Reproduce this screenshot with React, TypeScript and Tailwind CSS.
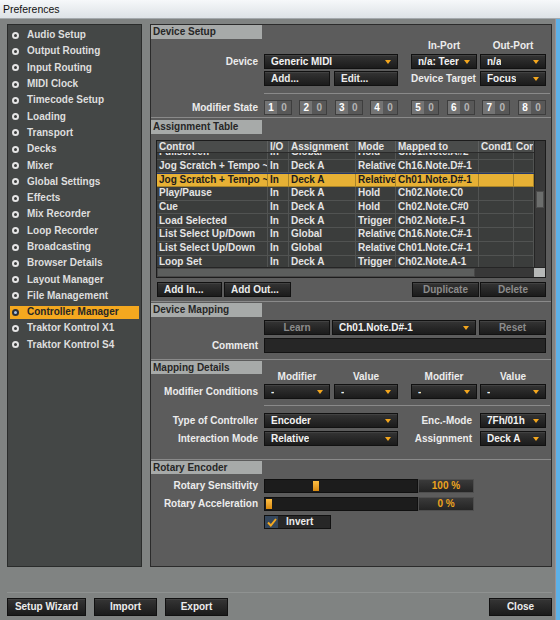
import React from 'react';

const sidebarItems = [
  'Audio Setup', 'Output Routing', 'Input Routing', 'MIDI Clock', 'Timecode Setup',
  'Loading', 'Transport', 'Decks', 'Mixer', 'Global Settings', 'Effects',
  'Mix Recorder', 'Loop Recorder', 'Broadcasting', 'Browser Details',
  'Layout Manager', 'File Management', 'Controller Manager',
  'Traktor Kontrol X1', 'Traktor Kontrol S4',
];

const headers = ['Control', 'I/O', 'Assignment', 'Mode', 'Mapped to', 'Cond1', 'Con'];

const rows = [
  ['Fullscreen', 'In', 'Global', 'Hold', 'Ch01.Note.A#2'],
  ['Jog Scratch + Tempo ~', 'In', 'Deck A', 'Relative', 'Ch16.Note.D#-1'],
  ['Jog Scratch + Tempo ~', 'In', 'Deck A', 'Relative', 'Ch01.Note.D#-1'],
  ['Play/Pause', 'In', 'Deck A', 'Hold', 'Ch02.Note.C0'],
  ['Cue', 'In', 'Deck A', 'Hold', 'Ch02.Note.C#0'],
  ['Load Selected', 'In', 'Deck A', 'Trigger', 'Ch02.Note.F-1'],
  ['List Select Up/Down', 'In', 'Global', 'Relative', 'Ch16.Note.C#-1'],
  ['List Select Up/Down', 'In', 'Global', 'Relative', 'Ch01.Note.C#-1'],
  ['Loop Set', 'In', 'Deck A', 'Trigger', 'Ch02.Note.A-1'],
  ['Loop Out', 'In', 'Deck A', 'Trigger', 'Ch02.Note.B-1'],
];

const cols = 'grid grid-cols-[111px_21px_67px_40px_83px_35px_20px]';
const dark = 'bg-linear-to-b from-[#353535] to-[#1b1b1b] border border-[#111] shadow-[inset_0_1px_0_rgba(255,255,255,0.07)]';

const Arrow = () => (
  <svg width="6" height="4" viewBox="0 0 6 4" className="ml-auto mr-[6px] shrink-0">
    <path d="M0 0H6L3 4Z" fill="#f4a71e" />
  </svg>
);

const Drop = ({ text, w }: { text: string; w: string }) => (
  <div className={`h-[15px] flex items-center pl-[6px] text-[#f2f2f2] ${dark} ${w}`}>
    <span className="whitespace-nowrap overflow-hidden">{text}</span>
    <Arrow />
  </div>
);

const Btn = ({ text, w, dim, left, h = 'h-[15px]' }: { text: string; w: string; dim?: boolean; left?: boolean; h?: string }) => (
  <div className={`${h} flex items-center ${left ? 'pl-[6px]' : 'justify-center'} ${dark} ${w} ${dim ? 'text-[#8c8c8c]' : 'text-[#ececec]'}`}>
    {text}
  </div>
);

const Head = ({ text, h = 'h-[14px]', mt = '' }: { text: string; h?: string; mt?: string }) => (
  <div className={`w-[111px] ${h} ${mt} bg-[#a7aaa9] text-[#262626] pl-[2px] flex items-center shrink-0`}>{text}</div>
);

const Sep = ({ mt }: { mt: string }) => <div className={`${mt} h-px bg-[#8a8a8a] shrink-0`} />;

const Label = ({ text }: { text: string }) => (
  <div className="w-[107px] text-right text-[#ececec] whitespace-nowrap shrink-0">{text}</div>
);

const ModPair = ({ n }: { n: number }) => (
  <div className="w-[28px] h-[15px] flex border border-[#3e3e3e] bg-[#585858]">
    <div className="w-[12px] flex items-center justify-center bg-[#747474] text-white">{n}</div>
    <div className="flex-1 flex items-center justify-center text-[#b4b4b4]">0</div>
  </div>
);

const Sidebar = () => (
  <div className="w-[135px] shrink-0 border border-[#2a2c2b] bg-[#444746] pt-[2px] flex flex-col">
    {sidebarItems.map((item) => {
      const sel = item === 'Controller Manager';
      return (
        <div key={item} className="h-[16.3px] flex items-center">
          <div className={`mx-[2px] h-[13px] flex-1 flex items-center ${sel ? 'bg-[#f4a81f] text-[#262626]' : 'text-[#dedede]'}`}>
            <div className={`ml-[2px] w-[7px] h-[7px] rounded-full border-2 ${sel ? 'border-[#2c3038] bg-[#a9c2e6]' : 'border-[#e4e4e4] bg-[#3a3c3b]'}`} />
            <span className="ml-[8px] whitespace-nowrap">{item}</span>
          </div>
        </div>
      );
    })}
  </div>
);

const Table = () => (
  <div className="ml-[5px] mt-[6px] w-[390px] h-[138px] shrink-0 border border-[#1c1c1c] bg-[#3b3d3c] flex flex-col">
    <div className="flex flex-1 min-h-0">
      <div className="w-[377px] flex flex-col">
        <div className={`${cols} h-[12px] shrink-0 bg-[#4a4c4b] border-b border-[#2a2a2a] text-[#e6e6e6]`}>
          {headers.map((h) => (
            <div key={h} className="px-[2px] flex items-center border-r border-[#5e605f] overflow-hidden whitespace-nowrap">{h}</div>
          ))}
        </div>
        <div className="flex-1 overflow-hidden">
          <div className="-mt-[7px]">
            {rows.map((r, i) => {
              const sel = i === 2;
              return (
                <div
                  key={i}
                  className={`${cols} h-[13.7px] border-b ${sel ? 'bg-[#e7b135] text-[#1c1c1c] border-b-[#a9852a] border-t border-t-[#24376a]' : 'text-[#e4e4e4] border-b-[#515352]'}`}
                >
                  {[...r, '', ''].map((c, j) => (
                    <div
                      key={j}
                      className={`px-[2px] flex items-center overflow-hidden whitespace-nowrap border-r ${sel ? 'border-[#a9852a]' : 'border-[#515352]'}`}
                    >
                      {c}
                    </div>
                  ))}
                </div>
              );
            })}
          </div>
        </div>
      </div>
      <div className="w-[11px] bg-[#393939] border-l border-[#252525] flex flex-col">
        <div className="h-[50px]" />
        <div className="h-[17px] mx-[1px] bg-[#6c6e6d] border border-[#4c4c4c]" />
      </div>
    </div>
    <div className="h-[10px] shrink-0 flex border-t border-[#252525]">
      <div className="w-[318px] bg-[#5c5e5d] border border-[#474747]" />
      <div className="w-[59px] bg-[#383838]" />
      <div className="w-[11px] bg-[#b6b8b7]" />
    </div>
  </div>
);

const Slider = ({ label, pos, value, mt }: { label: string; pos: string; value: string; mt: string }) => (
  <div className={`${mt} h-[14px] flex items-center shrink-0`}>
    <Label text={label} />
    <div className="ml-[6px] w-[154px] h-full bg-[#1c1c1c] border border-[#101010] flex items-center">
      <div className={`${pos} w-[6px] h-[10px] bg-linear-to-b from-[#ffc042] to-[#d98a0c]`} />
    </div>
    <div className="w-[56px] h-full flex items-center justify-center bg-linear-to-b from-[#3a3a3a] to-[#242424] border border-[#4e4e4e] text-[#eda41e]">
      {value}
    </div>
  </div>
);

const Panel = () => (
  <div className="flex-1 border border-[#2b2b2b] bg-[#5c5c5c] flex flex-col">
    {/* Device Setup */}
    <Head text="Device Setup" />
    <div className="mt-[1px] h-[12px] flex items-center text-[#ececec] shrink-0">
      <div className="ml-[260px] w-[66px] text-center">In-Port</div>
      <div className="ml-[3px] w-[66px] text-center">Out-Port</div>
    </div>
    <div className="mt-[2px] h-[15px] flex items-center shrink-0">
      <Label text="Device" />
      <div className="ml-[6px]"><Drop text="Generic MIDI" w="w-[134px]" /></div>
      <div className="ml-[13px]"><Drop text="n/a: Teer" w="w-[66px]" /></div>
      <div className="ml-[3px]"><Drop text="n/a" w="w-[66px]" /></div>
    </div>
    <div className="mt-[2px] h-[15px] flex items-center shrink-0">
      <div className="ml-[113px]"><Btn text="Add..." w="w-[66px]" left /></div>
      <div className="ml-[4px]"><Btn text="Edit..." w="w-[64px]" left /></div>
      <div className="ml-[13px] w-[66px] text-right pr-[3px] text-[#ececec] whitespace-nowrap">Device Target</div>
      <div className="ml-[3px]"><Drop text="Focus" w="w-[66px]" /></div>
    </div>
    <div className="mt-[7px] ml-[113px] mr-[1px] h-px bg-[#8a8a8a] shrink-0" />
    <div className="mt-[6px] h-[15px] flex items-center shrink-0">
      <Label text="Modifier State" />
      <div className="ml-[6px] w-[134px] flex justify-between">
        {[1, 2, 3, 4].map((n) => <ModPair key={n} n={n} />)}
      </div>
      <div className="ml-[13px] w-[135px] flex justify-between">
        {[5, 6, 7, 8].map((n) => <ModPair key={n} n={n} />)}
      </div>
    </div>
    <Sep mt="mt-[2px]" />

    {/* Assignment Table */}
    <Head text="Assignment Table" mt="mt-[2px]" />
    <Table />
    <div className="mt-[4px] h-[15px] flex items-center shrink-0">
      <div className="ml-[6px]"><Btn text="Add In..." w="w-[65px]" left /></div>
      <div className="ml-[2px]"><Btn text="Add Out..." w="w-[67px]" left /></div>
      <div className="ml-auto"><Btn text="Duplicate" w="w-[67px]" dim /></div>
      <div className="ml-[1px] mr-[5px]"><Btn text="Delete" w="w-[66px]" dim /></div>
    </div>
    <Sep mt="mt-[4px]" />

    {/* Device Mapping */}
    <Head text="Device Mapping" mt="mt-[1px]" />
    <div className="mt-[3px] h-[15px] flex items-center shrink-0">
      <div className="ml-[113px]"><Btn text="Learn" w="w-[66px]" dim /></div>
      <div className="ml-[2px]"><Drop text="Ch01.Note.D#-1" w="w-[144px]" /></div>
      <div className="ml-[3px]"><Btn text="Reset" w="w-[67px]" dim /></div>
    </div>
    <div className="mt-[3px] h-[15px] flex items-center shrink-0">
      <Label text="Comment" />
      <div className="ml-[6px] w-[282px] h-full bg-[#262626] border border-[#121212]" />
    </div>
    <Sep mt="mt-[6px]" />

    {/* Mapping Details */}
    <Head text="Mapping Details" h="h-[13px]" mt="mt-[1px]" />
    <div className="-mt-[3px] h-[12px] flex items-center text-[#ececec] shrink-0">
      <div className="ml-[113px] w-[66px] text-center">Modifier</div>
      <div className="ml-[4px] w-[64px] text-center">Value</div>
      <div className="ml-[13px] w-[66px] text-center">Modifier</div>
      <div className="ml-[3px] w-[66px] text-center">Value</div>
    </div>
    <div className="mt-[1px] h-[15px] flex items-center shrink-0">
      <Label text="Modifier Conditions" />
      <div className="ml-[6px]"><Drop text="-" w="w-[66px]" /></div>
      <div className="ml-[4px]"><Drop text="-" w="w-[64px]" /></div>
      <div className="ml-[13px]"><Drop text="-" w="w-[66px]" /></div>
      <div className="ml-[3px]"><Drop text="-" w="w-[66px]" /></div>
    </div>
    <div className="mt-[6px] ml-[113px] mr-[1px] h-px bg-[#8a8a8a] shrink-0" />
    <div className="mt-[7px] h-[15px] flex items-center shrink-0">
      <Label text="Type of Controller" />
      <div className="ml-[6px]"><Drop text="Encoder" w="w-[134px]" /></div>
      <div className="ml-[13px] w-[66px] text-right pr-[5px] text-[#ececec] whitespace-nowrap">Enc.-Mode</div>
      <div className="ml-[3px]"><Drop text="7Fh/01h" w="w-[66px]" /></div>
    </div>
    <div className="mt-[3px] h-[15px] flex items-center shrink-0">
      <Label text="Interaction Mode" />
      <div className="ml-[6px]"><Drop text="Relative" w="w-[134px]" /></div>
      <div className="ml-[13px] w-[66px] text-right pr-[5px] text-[#ececec] whitespace-nowrap">Assignment</div>
      <div className="ml-[3px]"><Drop text="Deck A" w="w-[66px]" /></div>
    </div>
    <Sep mt="mt-[13px]" />

    {/* Rotary Encoder */}
    <Head text="Rotary Encoder" h="h-[13px]" mt="mt-[1px]" />
    <Slider label="Rotary Sensitivity" pos="ml-[48px]" value="100 %" mt="mt-[5px]" />
    <Slider label="Rotary Acceleration" pos="ml-[1px]" value="0 %" mt="mt-[4px]" />
    <div className="mt-[4px] h-[14px] flex items-center shrink-0">
      <div className="ml-[113px] w-[67px] h-full flex items-center bg-[#272727] border border-[#111]">
        <div className="w-[13px] h-full flex items-center justify-center bg-[#34465b]">
          <svg width="10" height="9" viewBox="0 0 10 9">
            <path d="M1 4.5L3.8 7.5L9 1" stroke="#f4a81f" strokeWidth="2" fill="none" />
          </svg>
        </div>
        <span className="ml-[8px] text-[#ececec]">Invert</span>
      </div>
    </div>
  </div>
);

export default function App() {
  return (
    <div className="w-[560px] h-[620px] flex flex-col bg-[#808382] overflow-hidden font-['Liberation_Sans',Arial,sans-serif] text-[10px] font-bold leading-none select-none">
      <div className="h-[19px] shrink-0 flex items-center pl-[3px] bg-linear-to-b from-[#f6f8fa] to-[#dde2e6] border-b border-[#a4a9ad] text-[#111] font-normal text-[10.5px]">
        Preferences
      </div>
      <div className="flex-1 flex min-h-0">
        <div className="flex-1 flex flex-col pl-[7px] pr-[3px] pt-[5px]">
          <div className="flex gap-[8px] h-[543px] shrink-0">
            <Sidebar />
            <Panel />
          </div>
          <div className="mt-[25px] h-px bg-[#8f9291]" />
          <div className="mt-[5px] flex items-center">
            <Btn text="Setup Wizard" w="w-[79px]" h="h-[18px]" />
            <div className="ml-[8px]"><Btn text="Import" w="w-[63px]" h="h-[18px]" /></div>
            <div className="ml-[8px]"><Btn text="Export" w="w-[63px]" h="h-[18px]" /></div>
            <div className="ml-auto"><Btn text="Close" w="w-[63px]" h="h-[18px]" /></div>
          </div>
        </div>
        <div className="w-px bg-[#9c9294]" />
        <div className="w-[4px] bg-[#5db1e8]" />
      </div>
    </div>
  );
}
